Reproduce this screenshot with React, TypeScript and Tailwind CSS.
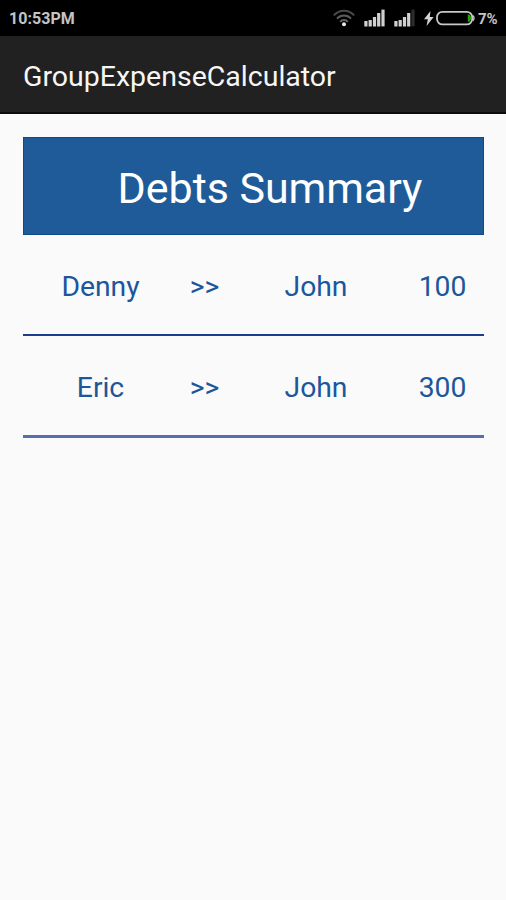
import { FC } from 'react';

interface Debt {
    from: string;
    to: string;
    amount: number;
    line: string;
}

const debts: Debt[] = [
    { from: 'Denny', to: 'John', amount: 100, line: 'h-[101px] border-b-[2px] border-[#1c3c8c]' },
    { from: 'Eric', to: 'John', amount: 300, line: 'h-[102px] border-b-[3px] border-[#5670aa]' },
];

const WifiIcon = () => (
    <svg className="w-[22px] h-[18px]" viewBox="0 0 22 18" fill="none" strokeWidth="2">
        <path d="M.8 6.4C6.6 .1 15.4 .1 21.2 6.4" stroke="#4a4a4a" />
        <path d="M4 9.6c3.8-4.2 10.2-4.2 14 0" stroke="#5c5c5c" />
        <path d="M7.2 12.8c2-2.4 5.6-2.4 7.6 0" stroke="#666" />
        <circle cx="11" cy="15.2" r="2" fill="#e8e8e8" />
    </svg>
);

const SignalIcon: FC<{ last: string }> = ({ last }) => (
    <svg className="w-[21px] h-[18px]" viewBox="0 0 21 18" fill="#d0d0d0">
        <path d="M.3 12h3.2v5.4H.3zM4.6 11h3.2v6.4H4.6zM8.9 8h3.2v9.4H8.9zM13.1 4h3.2v13.4h-3.2z" />
        <path d="M17.4 .6h3.2v16.8h-3.2z" fill={last} />
    </svg>
);

const BatteryIcon = () => (
    <svg className="w-[39px] h-[16px]" viewBox="0 0 39 16" fill="none">
        <rect x="1" y="1.8" width="35.2" height="12.6" rx="5.4" stroke="#c8c8c8" strokeWidth="1.8" />
        <path d="M36.8 5.6c1.6.8 1.6 4.2 0 5" stroke="#c8c8c8" strokeWidth="1.4" />
        <path d="M31.8 4.4h1.6q1.6 1 1.6 3.7t-1.6 3.7h-1.6z" fill="#25a80c" />
    </svg>
);

const StatusBar = () => (
    <div className="flex h-9 items-center bg-black pl-[9px] text-[16px] font-bold text-[#c4c4c4]">
        <span className="w-[324px] pt-[2px] tracking-[0.05px]">10:53PM</span>
        <WifiIcon />
        <div className="ml-[9px] flex gap-[9px]">
            <SignalIcon last="#d0d0d0" />
            <SignalIcon last="#2c2c2c" />
        </div>
        <svg className="ml-[9px] h-[15px] w-[10px]" viewBox="0 0 10 15" fill="#d4d4d4">
            <path d="M6.5 0 0 8.2h3.8L2.6 15 9.6 6H5.8z" />
        </svg>
        <div className="ml-[2px]">
            <BatteryIcon />
        </div>
        <span className="ml-[3px] pt-[2px] text-[15px]">7%</span>
    </div>
);

export default function App() {
    return (
        <div className="flex min-h-screen flex-col bg-[#fafafa] font-[Roboto,sans-serif]">
            <StatusBar />

            {/* Action bar */}
            <header className="flex h-[78px] items-center border-b-2 border-[#0c0c0c] bg-[#212121] px-[23px] pt-[6px]">
                <h1 className="text-[28.5px] text-[#f6f6f6]">GroupExpenseCalculator</h1>
            </header>

            <main className="pl-[23px] pr-[22px] pt-[23px]">
                <div className="flex h-[98px] items-center justify-center border border-[#0d4a8c] bg-[#205b99] pl-[33px] pt-[4px] text-[43px] tracking-[-0.05px] text-white">
                    Debts Summary
                </div>
                {debts.map(({ from, to, amount, line }) => (
                    <div key={from} className={`grid grid-cols-[155px_53px_170px_83px] items-center pt-[6px] text-center text-[28.3px] text-[#1c569b] ${line}`}>
                        <span>{from}</span>
                        <span>&gt;&gt;</span>
                        <span>{to}</span>
                        <span>{amount}</span>
                    </div>
                ))}
            </main>
        </div>
    );
}
